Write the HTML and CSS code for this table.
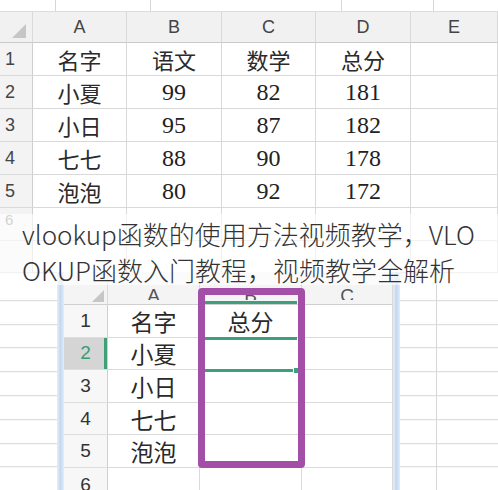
FILE: index.html
```html
<!DOCTYPE html>
<html>
<head>
<meta charset="utf-8">
<link rel="stylesheet" href="styles.css">
</head>
<body>
<div class="page">
  <div class="topsheet">
    <div class="strip">
      <span class="sl l1"></span><span class="sl l2"></span><span class="sl l3"></span><span class="sl l4"></span>
    </div>
    <div class="grid">
      <div class="hd corner"><span class="tri"></span></div>
      <div class="hd col">A</div><div class="hd col">B</div><div class="hd col">C</div><div class="hd col">D</div><div class="hd col">E</div>

      <div class="rn">1</div><div class="c cj">名字</div><div class="c cj">语文</div><div class="c cj">数学</div><div class="c cj">总分</div><div class="c"></div>
      <div class="rn">2</div><div class="c cj">小夏</div><div class="c num">99</div><div class="c num">82</div><div class="c num">181</div><div class="c"></div>
      <div class="rn">3</div><div class="c cj">小日</div><div class="c num">95</div><div class="c num">87</div><div class="c num">182</div><div class="c"></div>
      <div class="rn">4</div><div class="c cj">七七</div><div class="c num">88</div><div class="c num">90</div><div class="c num">178</div><div class="c"></div>
      <div class="rn">5</div><div class="c cj">泡泡</div><div class="c num">80</div><div class="c num">92</div><div class="c num">172</div><div class="c"></div>
      <div class="rn small-rn">6</div><div class="c"></div><div class="c"></div><div class="c"></div><div class="c"></div><div class="c"></div>
      <div class="rn"></div><div class="c"></div><div class="c"></div><div class="c"></div><div class="c"></div><div class="c"></div>
    </div>
  </div>

  <div class="bottom">
    <div class="bg-left"></div>
    <div class="frame"></div>
    <div class="win">
      <div class="wgrid">
        <div class="whd wcorner"><span class="tri small"></span></div>
        <div class="whd wcol"><span class="clip">A</span></div>
        <div class="whd wcol"><span class="clip">B</span></div>
        <div class="whd wcol"><span class="clip">C</span></div>

        <div class="wrn">1</div><div class="wc cj2">名字</div><div class="wc cj2">总分</div><div class="wc"></div>
        <div class="wrn sel">2</div><div class="wc cj2">小夏</div><div class="wc"></div><div class="wc"></div>
        <div class="wrn">3</div><div class="wc cj2">小日</div><div class="wc"></div><div class="wc"></div>
        <div class="wrn">4</div><div class="wc cj2">七七</div><div class="wc"></div><div class="wc"></div>
        <div class="wrn">5</div><div class="wc cj2">泡泡</div><div class="wc"></div><div class="wc"></div>
        <div class="wrn last">6</div><div class="wc"></div><div class="wc"></div><div class="wc"></div>
      </div>
      <span class="gline g1"></span>
      <span class="gline g2"></span>
      <span class="gline g3"></span>
      <span class="handle"></span>
      <span class="purple"></span>
    </div>
    <div class="frame"></div>
    <div class="bg-right"></div>
  </div>

  <div class="caption">vlookup函数的使用方法视频教学，VLOOKUP函数入门教程，视频教学全解析</div>
</div>
</body>
</html>
```

FILE: styles.css
```css
* { box-sizing: border-box; }
html, body { margin: 0; padding: 0; background: #fff; }
.page {
  position: relative;
  width: 498px;
  height: 490px;
  overflow: hidden;
  font-family: "Liberation Sans", sans-serif;
}

/* ---------- top sheet ---------- */
.topsheet { height: 272px; overflow: hidden; }
.strip {
  position: relative;
  height: 12px;
  background: #fff;
  border-bottom: 1px solid #dcdcdc;
}
.sl { position: absolute; top: 0; bottom: 0; width: 1px; background: #d6d6d6; }
.l1 { left: 55px; } .l2 { left: 150px; } .l3 { left: 341px; } .l4 { left: 433px; }

.grid {
  display: grid;
  grid-template-columns: 33px 94px 95px 94px 95px 87px;
  grid-template-rows: 31px repeat(7, 33px);
}
.hd {
  background: #f1f1f1;
  border-right: 1px solid #d9d9d9;
  border-bottom: 1px solid #c9c9c9;
  display: flex; align-items: center; justify-content: center;
  color: #444; font-size: 18px;
}
.corner { position: relative; }
.tri {
  position: absolute; left: 12px; top: 12px;
  width: 0; height: 0;
  border-left: 14px solid transparent;
  border-bottom: 14px solid #c6c6c6;
}
.tri.small { left: 28px; top: 18px; border-left-width: 12px; border-bottom-width: 12px; }
.rn {
  background: #f3f3f3;
  border-right: 1px solid #cfcfcf;
  border-bottom: 1px solid #dadada;
  display: flex; align-items: center;
  padding-left: 5px;
  color: #444; font-size: 18px;
}
.rn.small-rn {
  align-items: flex-start;
  padding-top: 3px;
  font-size: 15px;
  color: #888;
}
.c {
  border-right: 1px solid #d9d9d9;
  border-bottom: 1px solid #d9d9d9;
  display: flex; align-items: center; justify-content: center;
  color: #2a2a2a;
}
.cj { font-family: "Noto Sans CJK SC", sans-serif; font-size: 22px; }
.num { font-family: "Liberation Serif", serif; font-size: 24px; color: #222; }

/* ---------- bottom image ---------- */
.bottom {
  display: flex;
  height: 218px;
}
.bg-left, .bg-right {
  background-color: #fff;
  background-image: repeating-linear-gradient(to bottom, transparent 0 22.8px, #d6d6d6 22.8px 23.8px);
  background-position: 0 5.2px;
}
.bg-left { width: 57px; }
.bg-right {
  flex: 1;
  background-image:
    linear-gradient(to right, transparent 36px, #d6d6d6 36px 37px, transparent 37px),
    repeating-linear-gradient(to bottom, transparent 0 22.8px, #d6d6d6 22.8px 23.8px);
  background-position: 0 0, 0 5.2px;
}
.frame {
  width: 7px;
  background: linear-gradient(to right, #e3edf9, #c5d8ef 50%, #e3edf9);
}
.win {
  position: relative;
  width: 329px;
  background: #fff;
}
.wgrid {
  display: grid;
  grid-template-columns: 44px 92px 102px 91px;
  grid-template-rows: 33px repeat(6, 32.6px);
}
.whd {
  background: #f4f4f4;
  border-right: 1px solid #dadada;
  border-bottom: 1px solid #cfcfcf;
  display: flex; align-items: flex-end; justify-content: center;
  padding-bottom: 4px;
  color: #555; font-size: 19px;
}
.clip {
  display: block;
  height: 13px;
  line-height: 13px;
  padding-top: 2px;
  overflow: hidden;
}
.wcorner { position: relative; }
.wrn {
  background: #f7f7f7;
  border-right: 1px solid #cfcfcf;
  border-bottom: 1px solid #dedede;
  display: flex; align-items: center; justify-content: center;
  color: #333; font-size: 19px;
}
.wrn.last { align-items: flex-start; padding-top: 6px; }
.wrn.sel {
  background: #d5d5d5;
  color: #3a9c73;
  box-shadow: inset -3px 0 0 #3f9f76;
}
.wc {
  border-right: 1px solid #dadada;
  border-bottom: 1px solid #dadada;
  display: flex; align-items: center; justify-content: center;
  color: #2a2a2a;
}
.cj2 { font-family: "Noto Sans CJK SC", sans-serif; font-size: 23px; }

.gline {
  position: absolute;
  left: 141px;
  width: 92px;
  height: 3px;
  background: #3f9f7a;
}
.g1 { top: 29px; }
.g2 { top: 65px; }
.g3 { top: 97px; }
.handle {
  position: absolute;
  left: 229px; top: 95px;
  width: 6px; height: 7px;
  background: #3f9f7a;
  border: 1px solid #fff;
}
.purple {
  position: absolute;
  left: 134px; top: 16px;
  width: 107px; height: 180px;
  border: 7px solid #a44fa7;
  border-radius: 4px;
}

/* ---------- caption overlay ---------- */
.caption {
  position: absolute;
  left: 0; top: 214px;
  width: 498px; height: 71px;
  padding: 2px 14px 0 22px;
  background: rgba(255, 255, 255, 0.62);
  font-family: "Noto Sans CJK SC", sans-serif;
  font-weight: 300;
  font-size: 26px;
  line-height: 36px;
  color: #333;
  word-break: break-all;
}
```
